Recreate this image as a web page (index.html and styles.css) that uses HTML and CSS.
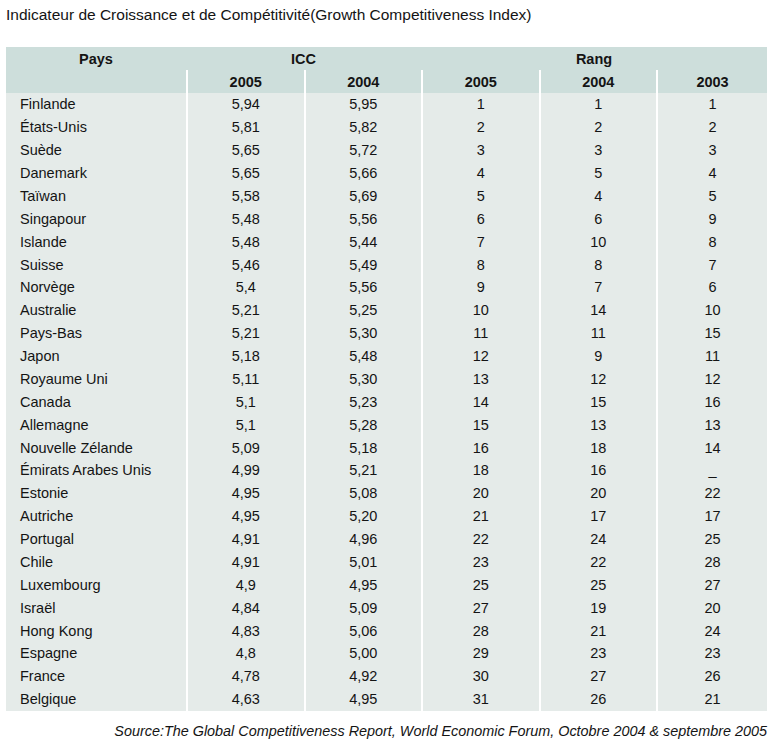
FILE: index.html
```html
<!DOCTYPE html>
<html lang="fr">
<head>
  <meta charset="UTF-8" />
  <title>Indicateur de Croissance et de Compétitivité</title>
  <link rel="stylesheet" href="styles.css">
</head>
<body>
  <div class="page">
    <h1 class="titre">Indicateur de Croissance et de Compétitivité(Growth Competitiveness Index)</h1>

    <table class="classement">
      <colgroup>
        <col class="c-pays">
        <col class="c-val">
        <col class="c-val">
        <col class="c-val">
        <col class="c-val">
        <col class="c-last">
      </colgroup>
      <thead>
        <tr class="h1">
          <th>Pays</th>
          <th colspan="2">ICC</th>
          <th colspan="3">Rang</th>
        </tr>
        <tr class="h2">
          <th></th>
          <th class="sep">2005</th>
          <th class="sep">2004</th>
          <th class="sep">2005</th>
          <th class="sep">2004</th>
          <th class="sep">2003</th>
        </tr>
      </thead>
      <tbody id="lignes"></tbody>
    </table>

    <p class="source">Source:The Global Competitiveness Report, World Economic Forum, Octobre 2004 &amp; septembre 2005</p>
  </div>

  <script>
    // pays, icc 2005, icc 2004, rang 2005, rang 2004, rang 2003
    const donnees = [
      ["Finlande", "5,94", "5,95", "1", "1", "1"],
      ["États-Unis", "5,81", "5,82", "2", "2", "2"],
      ["Suède", "5,65", "5,72", "3", "3", "3"],
      ["Danemark", "5,65", "5,66", "4", "5", "4"],
      ["Taïwan", "5,58", "5,69", "5", "4", "5"],
      ["Singapour", "5,48", "5,56", "6", "6", "9"],
      ["Islande", "5,48", "5,44", "7", "10", "8"],
      ["Suisse", "5,46", "5,49", "8", "8", "7"],
      ["Norvège", "5,4", "5,56", "9", "7", "6"],
      ["Australie", "5,21", "5,25", "10", "14", "10"],
      ["Pays-Bas", "5,21", "5,30", "11", "11", "15"],
      ["Japon", "5,18", "5,48", "12", "9", "11"],
      ["Royaume Uni", "5,11", "5,30", "13", "12", "12"],
      ["Canada", "5,1", "5,23", "14", "15", "16"],
      ["Allemagne", "5,1", "5,28", "15", "13", "13"],
      ["Nouvelle Zélande", "5,09", "5,18", "16", "18", "14"],
      ["Émirats Arabes Unis", "4,99", "5,21", "18", "16", "_"],
      ["Estonie", "4,95", "5,08", "20", "20", "22"],
      ["Autriche", "4,95", "5,20", "21", "17", "17"],
      ["Portugal", "4,91", "4,96", "22", "24", "25"],
      ["Chile", "4,91", "5,01", "23", "22", "28"],
      ["Luxembourg", "4,9", "4,95", "25", "25", "27"],
      ["Israël", "4,84", "5,09", "27", "19", "20"],
      ["Hong Kong", "4,83", "5,06", "28", "21", "24"],
      ["Espagne", "4,8", "5,00", "29", "23", "23"],
      ["France", "4,78", "4,92", "30", "27", "26"],
      ["Belgique", "4,63", "4,95", "31", "26", "21"]
    ];

    const corps = document.getElementById("lignes");
    donnees.forEach(ligne => {
      const tr = document.createElement("tr");
      ligne.forEach((val, i) => {
        const td = document.createElement("td");
        td.textContent = val;
        td.className = i === 0 ? "pays" : "sep";
        tr.appendChild(td);
      });
      corps.appendChild(tr);
    });
  </script>
</body>
</html>
```

FILE: styles.css
```css
:root {
  --entete: #cddedb;
  --fond-ligne: #e5ebe9;
  --texte: #141414;
}

body {
  margin: 0;
  background: #ffffff;
  font-family: "Liberation Sans", Arial, sans-serif;
  color: var(--texte);
}

.page {
  padding: 7px 14px 0 6px;
  width: 761px;
}

.titre {
  margin: 0;
  font-size: 15.5px;
  font-weight: normal;
  line-height: 16px;
  white-space: nowrap;
}

.classement {
  margin-top: 24px;
  width: 761px;
  table-layout: fixed;
  border-collapse: separate;
  border-spacing: 0;
  font-size: 14.5px;
}

.c-pays { width: 180px; }
.c-val { width: 117.5px; }
.c-last { width: 111px; }

.classement thead th {
  background: var(--entete);
  font-weight: bold;
  text-align: center;
  padding: 1px 0 0;
  line-height: 22px;
  vertical-align: top;
}

.h1 th {
  height: 21px;
}

.h2 th {
  height: 22px;
}

.classement td {
  background: var(--fond-ligne);
  height: 22.88px;
  padding: 0;
  text-align: center;
  line-height: 22px;
  vertical-align: middle;
}

.classement td.pays {
  text-align: left;
  padding-left: 14px;
  white-space: nowrap;
}

.classement .sep {
  border-left: 2px solid #ffffff;
}

.source {
  margin: 12px 0 0;
  font-size: 14.4px;
  font-style: italic;
  line-height: 16px;
  text-align: right;
  white-space: nowrap;
}
```
